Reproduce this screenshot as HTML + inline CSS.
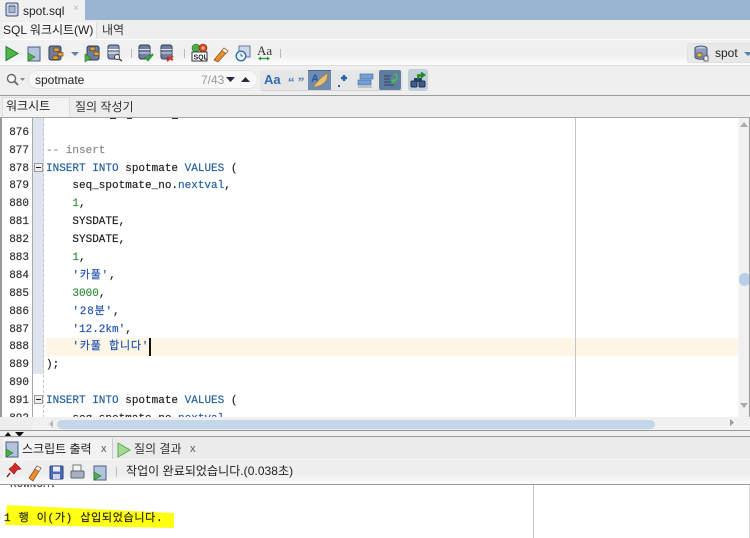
<!DOCTYPE html>
<html><head><meta charset="utf-8">
<style>
html,body{margin:0;padding:0;background:#fff}
#p{position:relative;width:750px;height:538px;overflow:hidden;background:#eee;font-family:"Liberation Sans","Noto Sans CJK KR",sans-serif;font-size:12px;color:#222}
#p div,#p svg,#p span.a{position:absolute}
.t{white-space:nowrap}
.c{position:absolute;left:46px;font-family:"Liberation Mono","Noto Sans CJK KR",monospace;font-size:11px;line-height:18px;height:18px;white-space:pre;color:#1a1a1a;-webkit-text-stroke:.15px currentColor}
.n{position:absolute;left:0;width:29px;text-align:right;font-family:"Liberation Mono",monospace;font-size:11px;line-height:18px;height:18px;color:#2a2a2a;-webkit-text-stroke:.15px currentColor}
.k{color:#1c5c9a}.s{color:#1d4fb0}.g{color:#2f8a3a}.m{color:#888}
.kr{letter-spacing:.8px}
</style></head><body>
<div id="p">
<!-- top -->
<div style="left:0;top:0;width:750px;height:20px;background:#9ab5d1"></div>
<div style="left:0;top:0;width:85px;height:20px;background:#f1f1f1"></div>
<svg style="left:5px;top:2px" width="14" height="15" viewBox="0 0 14 15"><rect x="1" y="1" width="12" height="13" rx="1.5" fill="#cfd6e6" stroke="#3d4d78"/><ellipse cx="7" cy="4.500" rx="3" ry="1.300" fill="#eef" stroke="#55628a" stroke-width=".7"/><rect x="4" y="4.500" width="6" height="6" fill="#aab6d0" stroke="#55628a" stroke-width=".7"/></svg>
<div class="t" style="left:23px;top:4px;font-size:12px;line-height:15px;color:#222">spot.sql</div>
<div class="t" style="left:73px;top:1px;font-size:10px;line-height:15px;color:#bbb">×</div>

<!-- tab row -->
<div style="left:0;top:20px;width:750px;height:19px;background:#eee"></div>
<div class="t" style="left:3px;top:22px;width:93px;height:17px;font-size:12px;line-height:17px;background:#f5f5f5;color:#222;border-right:1px solid #ddd">SQL 워크시트(W)</div>
<div class="t" style="left:102px;top:22px;font-size:12px;line-height:17px;color:#333">내역</div>

<!-- toolbar -->
<div style="left:0;top:39px;width:750px;height:26px;border-top:1px solid #fff;box-sizing:border-box;background:linear-gradient(#f1f1f1,#f0f0f0 60%,#fcfcfc)"></div>
<div style="left:0;top:65px;width:750px;height:1px;background:#ddd"></div>
<svg style="left:0;top:40px" width="300" height="26" viewBox="0 0 300 26">
 <path d="M6 6.500 L18 13.500 L6 20.500 Z" fill="#52b548" stroke="#1f7a2a"/>
 <rect x="28" y="7" width="12" height="14" fill="#b4c3dc" stroke="#4a5f88"/><path d="M28 13 L35 17 L28 21Z" fill="#4cae45" stroke="#1f7a2a" stroke-width=".6"/>
 <rect x="49" y="6" width="12" height="14" rx="2" fill="#6f7d9c" stroke="#2f3b5a"/><rect x="54" y="8" width="5" height="3.500" fill="#e8a33a" stroke="#5c3a0c" stroke-width=".6"/><rect x="58" y="12.500" width="5" height="3.500" fill="#e8a33a" stroke="#5c3a0c" stroke-width=".6"/><rect x="53" y="16" width="5" height="3.500" fill="#e8a33a" stroke="#5c3a0c" stroke-width=".6"/>
 <path d="M71 12 H79 L75 16Z" fill="#5b7fae"/>
 <rect x="87" y="6" width="12" height="14" rx="2" fill="#6f7d9c" stroke="#2f3b5a"/><rect x="90" y="7" width="5" height="3.500" fill="#e8a33a" stroke="#5c3a0c" stroke-width=".6"/><rect x="94" y="12" width="5" height="3.500" fill="#e8a33a" stroke="#5c3a0c" stroke-width=".6"/><path d="M85 14 L91 18 L85 22Z" fill="#4cae45" stroke="#1f7a2a" stroke-width=".6"/>
 <rect x="108" y="5" width="11" height="14" rx="2" fill="#8c97b3" stroke="#34415f"/><path d="M108 9.500 H119 M108 13 H119" stroke="#fff"/><circle cx="117" cy="17" r="2.500" fill="#eee" stroke="#444"/><path d="M119 19 L122 21" stroke="#444" stroke-width="1.400"/>
 <rect x="131" y="9" width="1" height="9" fill="#bbb"/>
 <rect x="139" y="5" width="11" height="14" rx="2" fill="#6f7d9c" stroke="#2f3b5a"/><path d="M139 9.500 H150 M139 13 H150" stroke="#dde"/><path d="M145 17 L148 20 L153 14" fill="none" stroke="#2da32d" stroke-width="2.200"/>
 <rect x="161" y="5" width="11" height="14" rx="2" fill="#6f7d9c" stroke="#2f3b5a"/><path d="M161 9.500 H172 M161 13 H172" stroke="#dde"/><path d="M167 17 L173 20 M167 21 L173 16" stroke="#c8342a" stroke-width="2"/>
 <rect x="184" y="9" width="1" height="9" fill="#bbb"/>
 <circle cx="196" cy="8" r="4" fill="#4cae45" stroke="#1f7a2a" stroke-width=".6"/><circle cx="203" cy="8" r="4" fill="#d8443a" stroke="#8a2017" stroke-width=".6"/><circle cx="203" cy="8" r="1.600" fill="#fc3"/><rect x="192" y="12" width="15" height="9" fill="#fff" stroke="#333"/><text x="193.500" y="19.500" font-family="Liberation Sans" font-size="7" font-weight="700" fill="#223">SQL</text>
 <path d="M214 20 L224 8 L228 11 L218 22 Z" fill="#e8902f" stroke="#8a4a12" stroke-width=".7"/><path d="M222 10.500 L224 8 L228 11 L226 13.500Z" fill="#f2f2f2" stroke="#8a4a12" stroke-width=".6"/>
 <rect x="239" y="6" width="11" height="11" fill="#cfd8e8" stroke="#6b7a99"/><circle cx="241" cy="16" r="4.800" fill="#eaf2fb" stroke="#2d6fb5" stroke-width="1.400"/><path d="M241 13.500 V16 H243" stroke="#444" fill="none" stroke-width=".8"/>
 <text x="257" y="15" font-family="Liberation Serif" font-size="13" fill="#333">Aa</text><path d="M259 18.500 H269" stroke="#2b9a35" stroke-width="1.300"/><path d="M258 18.500 L261 16.500 V20.500Z M270 18.500 L267 16.500 V20.500Z" fill="#2b9a35"/>
 <rect x="280" y="9" width="1" height="9" fill="#bbb"/>
</svg>
<!-- connection combo -->
<div style="left:687px;top:43px;width:70px;height:20px;border-radius:3px;background:#e8e8e8;border:1px solid #e0e0e0;box-sizing:border-box"></div>
<svg style="left:694px;top:45px" width="16" height="17" viewBox="0 0 16 17"><ellipse cx="7" cy="3.500" rx="6" ry="2.500" fill="#c2cbe0" stroke="#3d4a7a"/><path d="M1 3.500 V12 C1 15 13 15 13 12 V3.500" fill="#8f9cc0" stroke="#3d4a7a"/><rect x="3" y="8" width="5" height="4" fill="#e9c033" stroke="#333" stroke-width=".6"/><rect x="10" y="11" width="4" height="5" fill="#eee" stroke="#333" stroke-width=".7"/></svg>
<div class="t" style="left:715px;top:45px;font-size:12px;line-height:16px;color:#222">spot</div>
<svg style="left:744px;top:51px" width="6" height="6"><path d="M0 1 H8 L4 5Z" fill="#5b7fae"/></svg>

<!-- search row -->
<div style="left:0;top:66px;width:750px;height:29px;background:#efefef"></div>
<svg style="left:6px;top:73px" width="20" height="14" viewBox="0 0 20 14"><circle cx="5.500" cy="5.500" r="4" fill="#fff" stroke="#666" stroke-width="1.400"/><path d="M8.500 8.500 L12 12" stroke="#666" stroke-width="1.800"/><path d="M14 5 H19 L16.500 8Z" fill="#888"/></svg>
<div style="left:28px;top:70px;width:230px;height:19px;background:#f8f8f8;border-radius:10px;border:1px solid #e4e4e4;box-sizing:border-box"></div>
<div class="t" style="left:35px;top:72px;font-size:12px;line-height:16px;color:#222">spotmate</div>
<div class="t" style="left:201px;top:72px;font-size:12px;line-height:16px;color:#999">7/43</div>
<svg style="left:226px;top:76px" width="24" height="8"><path d="M0 1 H9 L4.500 6Z M15 6 H24 L19.500 1Z" fill="#1f2c44"/></svg>
<!-- search buttons -->
<div style="left:260px;top:70px;width:143px;height:20px;background:#e6e6e6;border-radius:3px;border-bottom:1px solid #d2d2d2"></div>
<div style="left:308px;top:70px;width:23px;height:20px;background:#6e8bb0;border-top:1px solid #4d6484;box-sizing:border-box"></div>
<div style="left:379px;top:70px;width:22px;height:20px;background:#5f7d9f;border-radius:2px;box-sizing:border-box"></div>
<div style="left:408px;top:69px;width:20px;height:22px;background:#c3ced9;border-radius:3px"></div>
<div class="t" style="left:264px;top:72px;font-size:13px;font-weight:700;line-height:16px;color:#2a6cb0">Aa</div>
<div class="t" style="left:288px;top:74px;font-family:'Liberation Serif';font-size:13px;font-weight:700;line-height:16px;color:#4a7fb8">“ ”</div>
<svg style="left:308px;top:70px" width="130" height="21" viewBox="0 0 130 21">
 <text x="3" y="12" font-size="11" font-weight="700" font-family="Liberation Sans" fill="#2058b0">A</text>
 <path d="M5 17 C10 10 14 6 20 3 L19 9 C17 14 11 17 5 17Z" fill="#e8bd75" stroke="#a4762d" stroke-width=".7"/>
 <path d="M33 8 H39 M36 5 V11" stroke="#1f62b0" stroke-width="2.400"/><rect x="30" y="15" width="2" height="2" fill="#1f62b0"/>
 <rect x="52" y="4" width="13" height="5" fill="#6fa0d8" stroke="#44699a" stroke-width=".6"/><rect x="50" y="10" width="13" height="5" fill="#6fa0d8" stroke="#44699a" stroke-width=".6"/><path d="M50 17 H64" stroke="#999"/>
 <path d="M76 6 H83 M76 9 H82 M76 12 H83 M76 15 H86" stroke="#2c3e55"/><path d="M86 4 C90 4 90 10 86 11 L84 11 M86 9 L84 11 L86 13" fill="none" stroke="#3fc24a" stroke-width="1.600"/>
 <rect x="103" y="11" width="6" height="6" rx="1" fill="#3b5d8f" stroke="#1e2e4a"/><rect x="111" y="11" width="6" height="6" rx="1" fill="#3b5d8f" stroke="#1e2e4a"/><rect x="106" y="8" width="8" height="4" fill="#2a3f60"/><path d="M110 9 V5 H115 M113 2.500 L116.500 5 L113 7.500" fill="#38a83c" stroke="#208a2a" stroke-width="1.800"/>
</svg>
<div style="left:0;top:95px;width:750px;height:1px;background:#9a9a9a"></div>

<!-- lower tabs -->
<div style="left:0;top:96px;width:750px;height:22px;background:#ededed"></div>
<div style="left:2px;top:97px;width:68px;height:20px;background:#f3f3f3;border:1px solid #ddd;border-bottom:none;box-sizing:border-box"></div>
<div class="t" style="left:6px;top:98px;font-size:12px;line-height:17px;color:#222">워크시트</div>
<div class="t" style="left:75px;top:99px;font-size:12px;line-height:17px;color:#333">질의 작성기</div>
<div style="left:0;top:117px;width:750px;height:1px;background:#a8a8a8"></div>

<!-- editor -->
<div style="left:0;top:118px;width:750px;height:312px;background:#fff;overflow:hidden">
 <div style="left:0;top:0;width:2px;height:312px;background:#9b9b9b"></div>
 <div style="left:32px;top:0;width:1px;height:312px;background:#a8a8a8"></div>
 <div style="left:33px;top:0;width:11px;height:256px;background:#dfe5ee"></div>
 <div style="left:43px;top:0;width:0;height:300px;border-left:1px dashed #c4c4c4"></div>
 <div style="left:46px;top:220px;width:692px;height:18px;background:#fdf6e5"></div>
 <div style="left:575px;top:0;width:1px;height:300px;background:#c4c4c4"></div>
 <div style="left:738px;top:0;width:11px;height:300px;background:#f0f0f0;border-left:1px solid #f6f6f6;box-sizing:border-box"></div>
 <svg style="left:739px;top:2px" width="10" height="8"><path d="M1 7 H9 L5 2Z" fill="#aaa"/></svg>
 <div style="left:739px;top:155px;width:11px;height:13px;border-radius:6px;background:#b9cfe7"></div>
 <svg style="left:739px;top:284px" width="10" height="8"><path d="M1 1 H9 L5 6Z" fill="#aaa"/></svg>
 <div style="left:749px;top:0;width:1px;height:312px;background:#999"></div>
 <!-- fold icons -->
 <div style="left:34px;top:45px;width:9px;height:9px;background:#eee;border:1px solid #999;box-sizing:border-box"><div style="left:1px;top:3px;width:5px;height:1px;background:#222"></div></div>
 <div style="left:34px;top:277px;width:9px;height:9px;background:#eee;border:1px solid #999;box-sizing:border-box"><div style="left:1px;top:3px;width:5px;height:1px;background:#222"></div></div>
 <div style="left:110px;top:0;width:6px;height:1px;background:#333"></div>
 <div style="left:127px;top:0;width:5px;height:1px;background:#333"></div>
 <div style="left:172px;top:0;width:6px;height:1px;background:#333"></div>
 <span class="n" style="top:6px">876</span>
 <span class="n" style="top:24px">877</span><span class="c m" style="top:24px;color:#888">-- insert</span>
 <span class="n" style="top:42px">878</span><span class="c" style="top:42px"><span class="k">INSERT INTO</span> spotmate <span class="k">VALUES</span> (</span>
 <span class="n" style="top:59px">879</span><span class="c" style="top:59px">    seq_spotmate_no.<span class="k">nextval</span>,</span>
 <span class="n" style="top:77px">880</span><span class="c" style="top:77px">    <span class="g">1</span>,</span>
 <span class="n" style="top:95px">881</span><span class="c" style="top:95px">    SYSDATE,</span>
 <span class="n" style="top:113px">882</span><span class="c" style="top:113px">    SYSDATE,</span>
 <span class="n" style="top:131px">883</span><span class="c" style="top:131px">    <span class="g">1</span>,</span>
 <span class="n" style="top:149px">884</span><span class="c" style="top:149px">    <span class="s kr">'카풀'</span>,</span>
 <span class="n" style="top:167px">885</span><span class="c" style="top:167px">    <span class="g">3000</span>,</span>
 <span class="n" style="top:185px">886</span><span class="c" style="top:185px">    <span class="s kr">'28분'</span>,</span>
 <span class="n" style="top:203px">887</span><span class="c" style="top:203px">    <span class="s">'12.2km'</span>,</span>
 <span class="n" style="top:220px">888</span><span class="c" style="top:220px">    <span class="s kr">'카풀 합니다'</span></span>
 <div style="left:149px;top:220px;width:2px;height:18px;background:#111"></div>
 <span class="n" style="top:238px">889</span><span class="c" style="top:238px">);</span>
 <span class="n" style="top:256px">890</span>
 <span class="n" style="top:274px">891</span><span class="c" style="top:274px"><span class="k">INSERT INTO</span> spotmate <span class="k">VALUES</span> (</span>
 <span class="n" style="top:292px">892</span><span class="c" style="top:292px">    seq_spotmate_no.<span class="k">nextval</span>,</span>
 <!-- horizontal scrollbar -->
 <div style="left:33px;top:299px;width:717px;height:13px;background:#f1f1f1"></div>
 <div style="left:0;top:299px;width:33px;height:13px;background:#eee"></div>
 <div style="left:57px;top:302px;width:598px;height:9px;border-radius:5px;background:#c3d6ea"></div>
 <svg style="left:48px;top:302px" width="6" height="8"><path d="M5 0 V8 L1 4Z" fill="#bbb"/></svg>
 <svg style="left:729px;top:300px" width="6" height="9"><path d="M1 1 V8 L5 4.500Z" fill="#999"/></svg>
</div>
<div style="left:0;top:430px;width:750px;height:1px;background:#999"></div>

<!-- splitter -->
<div style="left:0;top:431px;width:750px;height:6px;background:#f0f0f0"></div>
<svg style="left:4px;top:431px" width="22" height="6"><path d="M0 6 L4 1 L8 6Z M11 1 H20 L15.500 6Z" fill="#111"/></svg>
<div style="left:0;top:436px;width:750px;height:1px;background:#9a9a9a"></div>

<!-- output tabs -->
<div style="left:0;top:437px;width:750px;height:22px;background:#ebebeb"></div>
<div style="left:3px;top:438px;width:110px;height:21px;background:#f2f2f2;border-right:1px solid #ccc;box-sizing:border-box"></div>
<svg style="left:5px;top:441px" width="15" height="17" viewBox="0 0 15 17"><rect x="1" y="1" width="12" height="15" fill="#b4c3dc" stroke="#4a5f88"/><path d="M1 8 L8 12 L1 16Z" fill="#4cae45" stroke="#1f7a2a" stroke-width=".6"/></svg>
<div class="t" style="left:22px;top:441px;font-size:12px;line-height:16px;color:#222">스크립트 출력</div>
<div class="t" style="left:101px;top:441px;font-size:11px;line-height:16px;color:#555">x</div>
<svg style="left:117px;top:442px" width="15" height="16" viewBox="0 0 15 16"><path d="M1 1 L13 8 L1 15Z" fill="#a5da92" stroke="#5eaa54"/></svg>
<div class="t" style="left:134px;top:441px;font-size:12px;line-height:16px;color:#333">질의 결과</div>
<div class="t" style="left:190px;top:441px;font-size:11px;line-height:16px;color:#555">x</div>
<div style="left:0;top:459px;width:750px;height:1px;background:#f8f8f8"></div>

<!-- output toolbar -->
<div style="left:0;top:460px;width:750px;height:24px;background:linear-gradient(#efefef,#eee 60%,#fbfbfb)"></div>
<svg style="left:0;top:460px" width="125" height="24" viewBox="0 0 125 24">
 <path d="M15 3 L21 9 L17 10 L14 14 L9 9 L13 6Z" fill="#d52a28" stroke="#8a1714" stroke-width=".6"/><path d="M10 13 L7 17" stroke="#8a1714" stroke-width="1.400"/>
 <path d="M29 18 L37 6 L41 8 L33 21 Z" fill="#e8902f" stroke="#8a4a12" stroke-width=".7"/><path d="M35 9 L37 6 L41 8 L39 11.500Z" fill="#f2f2f2" stroke="#8a4a12" stroke-width=".6"/>
 <rect x="50" y="6" width="13" height="13" rx="1" fill="#4b6bb5" stroke="#2c3e7a"/><rect x="53" y="6.500" width="7" height="5" fill="#e8eefa"/><rect x="53" y="14" width="7" height="5" fill="#cdd6e8"/>
 <rect x="73" y="5" width="8" height="6" fill="#f5f5f5" stroke="#777"/><rect x="71" y="11" width="13" height="7" rx="1" fill="#a8b0bf" stroke="#5c6577"/>
 <rect x="94" y="6" width="12" height="14" fill="#b4c3dc" stroke="#4a5f88"/><path d="M94 12 L101 16 L94 20Z" fill="#4cae45" stroke="#1f7a2a" stroke-width=".6"/>
 <rect x="116" y="7" width="1" height="10" fill="#bbb"/>
</svg>
<div class="t" style="left:126px;top:463px;font-size:12px;line-height:17px;color:#222;letter-spacing:.05px">작업이 완료되었습니다.(0.038초)</div>
<div style="left:0;top:484px;width:750px;height:1px;background:#999"></div>

<!-- output -->
<div style="left:0;top:485px;width:750px;height:53px;background:#fff;overflow:hidden">
 <div style="left:533px;top:0;width:1px;height:53px;background:#c4c4c4"></div>
 <div style="left:749px;top:0;width:1px;height:53px;background:#ddd"></div>
 <svg style="left:0;top:0" width="200" height="53"><path d="M7 20 L174 28 L174 43 L5 40Z" fill="#ffff14"/></svg>
 <span class="c" style="left:10px;top:-9px;color:#444">ROWNUM:</span>
 <div class="t" style="left:4px;top:26px;font-family:'Liberation Mono','Noto Sans CJK KR',monospace;font-size:11px;line-height:16px;color:#222;letter-spacing:.7px;-webkit-text-stroke:.15px currentColor">1 행 이(가) 삽입되었습니다.</div>
</div>
</div>
</body></html>
